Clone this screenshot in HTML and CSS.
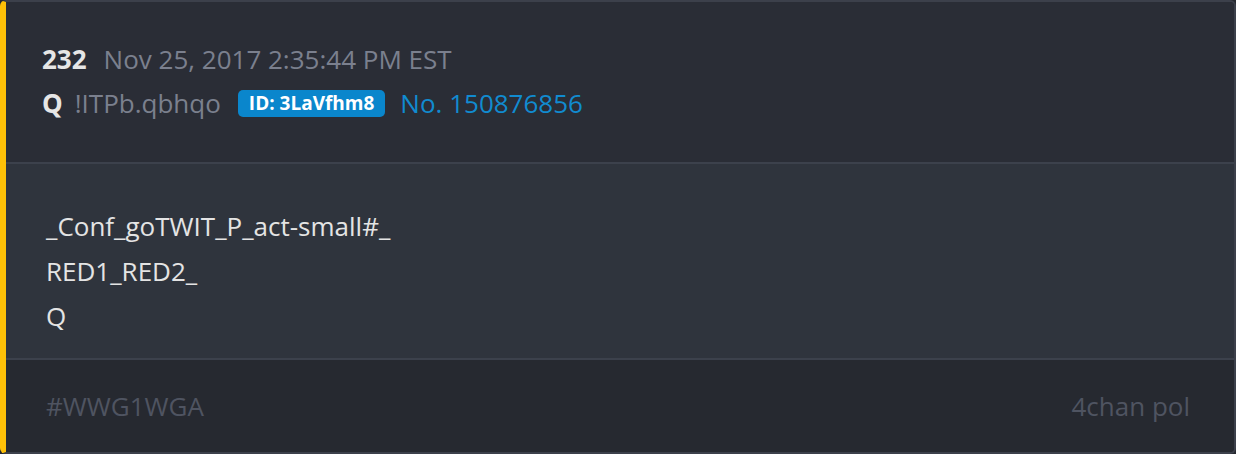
FILE: index.html
```html
<!DOCTYPE html>
<html>
<head>
<meta charset="utf-8">
<link rel="stylesheet" href="styles.css">
</head>
<body>
<div class="card">
  <div class="head">
    <div class="line1"><span class="num">232</span><span class="date">Nov 25, 2017 2:35:44 PM EST</span></div>
    <div class="line2"><span class="name">Q</span><span class="trip">!ITPb.qbhqo</span><span class="badge">ID: 3LaVfhm8</span><span class="no">No. 150876856</span></div>
  </div>
  <div class="body">
    <div>_Conf_goTWIT_P_act-small#_</div>
    <div>RED1_RED2_</div>
    <div>Q</div>
  </div>
  <div class="foot">
    <span>#WWG1WGA</span>
    <span>4chan pol</span>
  </div>
</div>
</body>
</html>
```
FILE: styles.css
```css
html, body {
  margin: 0;
  padding: 0;
  background: #262930;
}
body {
  font-family: "Open Sans", "Noto Sans", sans-serif;
  width: 1236px;
  height: 454px;
  overflow: hidden;
}
.card {
  box-sizing: border-box;
  width: 1236px;
  height: 454px;
  border: 2px solid #3c404b;
  border-left: 6px solid #ffc107;
  border-radius: 6px;
  overflow: hidden;
  display: flex;
  flex-direction: column;
}
.head {
  background: #2a2d36;
  padding: 35px 36px 0;
  height: 162px;
  box-sizing: border-box;
  border-bottom: 2px solid #3c414c;
}
.line1, .line2 {
  display: flex;
  align-items: center;
  height: 44px;
  font-size: 26px;
}
.num {
  font-weight: 700;
  color: #e6e6e6;
  margin-right: 17px;
}
.date, .trip {
  color: #7b808e;
}
.name {
  font-weight: 700;
  color: #e6e6e6;
  margin-right: 12px;
}
.trip { margin-right: 17px; }
.badge {
  background: #0a86cc;
  color: #fff;
  font-weight: 700;
  font-size: 19px;
  line-height: 26px;
  border-radius: 5px;
  padding: 0 11px 1px;
  margin-right: 15px;
}
.no { color: #118bd0; }
.body {
  background: #2f343d;
  padding: 40px 40px 0;
  height: 196px;
  box-sizing: border-box;
  border-bottom: 2px solid #3c414c;
  color: #e4e4e4;
  font-size: 26px;
  line-height: 45px;
}
.foot {
  flex: 1;
  background: #262930;
  display: flex;
  justify-content: space-between;
  align-items: center;
  padding: 0 44px 0 40px;
  color: #4f5461;
  font-size: 26px;
}
```
